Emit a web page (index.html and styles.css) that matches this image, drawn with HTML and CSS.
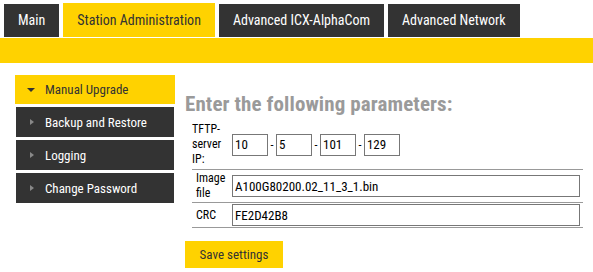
FILE: index.html
```html
<!DOCTYPE html>
<html lang="en">
  <head>
    <meta charset="utf-8">
    <title>Station Administration</title>
    <link rel="stylesheet" href="styles.css">
  </head>
  <body>
    <ul id=tabs>
      <li><a href="#">Main</a></li>
      <li class="active"><a href="#">Station Administration</a></li>
      <li><a href="#">Advanced ICX-AlphaCom</a></li>
      <li><a href="#">Advanced Network</a></li>
    </ul>
    <div id=bar></div>

    <section id=page>
      <ul id=menu>
        <li class="active"><a href="#"><span class="arrow down"></span>Manual Upgrade</a></li>
        <li><a href="#"><span class="arrow"></span>Backup and Restore</a></li>
        <li><a href="#"><span class="arrow"></span>Logging</a></li>
        <li><a href="#"><span class="arrow"></span>Change Password</a></li>
      </ul>

      <div id=content>
        <h1>Enter the following parameters:</h1>
        <table class="params">
          <tr class="tall">
            <td class="label">TFTP-server IP:</td>
            <td>
              <div class="ip">
                <input type="text" value="10"> -
                <input type="text" value="5"> -
                <input type="text" value="101"> -
                <input type="text" value="129">
              </div>
            </td>
          </tr>
          <tr>
            <td class="label">Image file</td>
            <td><input class="wide" type="text" value="A100G80200.02_11_3_1.bin"></td>
          </tr>
          <tr>
            <td class="label">CRC</td>
            <td><input class="wide" type="text" value="FE2D42B8"></td>
          </tr>
        </table>
        <button class="save">Save settings</button>
      </div>
    </section>
  </body>
</html>
```

FILE: styles.css
```css
* {
  margin:0;
  padding:0;
  box-sizing:border-box;
}

body {
  font-family:"Roboto Condensed","Liberation Sans Narrow",Roboto,sans-serif;
  font-size:13px;
  color:#333;
  background:#fff;
}

a {
  text-decoration:none;
  color:inherit;
}

#tabs {
  list-style:none;
  display:flex;
  gap:4px;
  padding:4px 0 0 4px;
  height:37px;
}

#tabs li a {
  display:block;
  height:33px;
  line-height:33px;
  padding:0 14px;
  background:#333;
  color:#fff;
  font-size:14px;
}

#tabs li.active a {
  background:#ffd200;
  color:#333;
  height:34px;
  margin:-1px 0 0;
  padding:1px 14px 0;
}

#bar {
  margin-top:1px;
  height:25px;
  background:#ffd200;
}

#page {
  display:flex;
  padding:12px 0 0 15px;
}

#menu {
  list-style:none;
  width:160px;
}

#menu li a {
  display:flex;
  align-items:center;
  height:30px;
  margin:3px 1px 0;
  background:#333;
  color:#fff;
}

#menu li.active a {
  height:29px;
  margin:0;
  background:#ffd200;
  color:#333;
}

.arrow {
  width:0;
  height:0;
  margin:0 11px 0 14px;
  border-top:3px solid transparent;
  border-bottom:3px solid transparent;
  border-left:4px solid #888;
}

.arrow.down {
  margin:0 10px 0 12px;
  border-left:4px solid transparent;
  border-right:4px solid transparent;
  border-top:4px solid #333;
  border-bottom:0;
}

#content {
  padding:17px 0 0 10px;
}

#content h1 {
  font-size:21px;
  letter-spacing:0.1px;
  font-weight:bold;
  color:#9a9a9a;
  line-height:24px;
}

.params {
  border-collapse:collapse;
  margin:3px 0 0 7px;
  width:391px;
  font-size:12px;
  color:#000;
}

.params td {
  border-bottom:1px solid #999;
  padding:1px 0;
  vertical-align:middle;
}

.params tr.tall td {
  padding:3px 0 2px;
}

.params td.label {
  width:40px;
  padding-left:4px;
  padding-right:4px;
  line-height:15px;
}

.params input {
  font:13px "Roboto Condensed","Liberation Sans Narrow",Roboto,sans-serif;
  color:#000;
  border:1px solid #777;
  height:22px;
  padding:0 2px;
}

.ip {
  display:flex;
  align-items:center;
  gap:2.5px;
}

.ip input {
  width:36px;
}

.params input.wide {
  width:348px;
}

.save {
  margin-top:13px;
  width:98px;
  height:27px;
  background:#ffd200;
  color:#333;
  font:13px "Roboto Condensed","Liberation Sans Narrow",Roboto,sans-serif;
  border:0;
}
```
